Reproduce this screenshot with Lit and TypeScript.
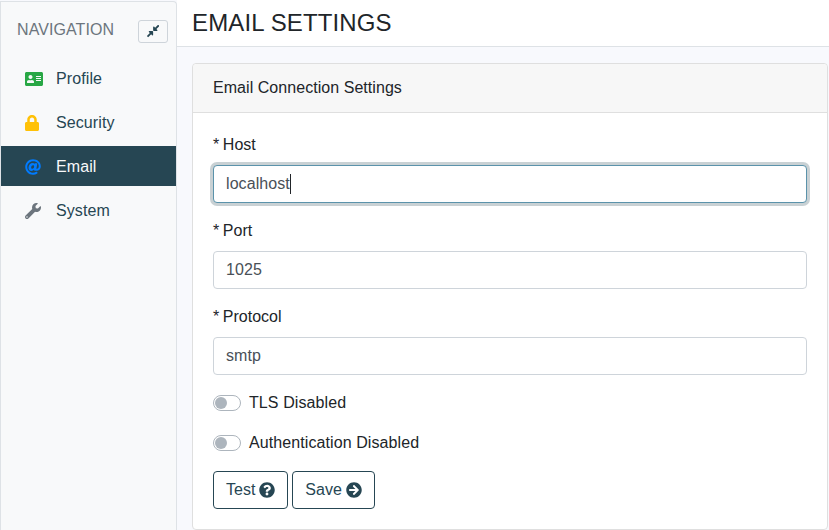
import { LitElement, html, css, svg } from "lit";
import { customElement } from "lit/decorators.js";

const ICONS: Record<string, [string, string]> = {
  card: ["0 0 576 512", "M528 32H48C21.5 32 0 53.5 0 80v352c0 26.5 21.5 48 48 48h480c26.5 0 48-21.5 48-48V80c0-26.5-21.5-48-48-48zm-352 96c35.3 0 64 28.7 64 64s-28.7 64-64 64-64-28.7-64-64 28.7-64 64-64zm112 236.8c0 10.6-10 19.2-22.4 19.2H86.4C74 384 64 375.4 64 364.8v-19.2c0-31.8 30.1-57.6 67.2-57.6h5c12.3 5.1 25.7 8 39.8 8s27.6-2.9 39.8-8h5c37.1 0 67.2 25.8 67.2 57.6v19.2zM512 312c0 4.4-3.6 8-8 8H360c-4.4 0-8-3.6-8-8v-16c0-4.4 3.6-8 8-8h144c4.4 0 8 3.6 8 8v16zm0-64c0 4.4-3.6 8-8 8H360c-4.4 0-8-3.6-8-8v-16c0-4.4 3.6-8 8-8h144c4.4 0 8 3.6 8 8v16zm0-64c0 4.4-3.6 8-8 8H360c-4.4 0-8-3.6-8-8v-16c0-4.4 3.6-8 8-8h144c4.4 0 8 3.6 8 8v16z"],
  lock: ["0 0 448 512", "M400 224h-24v-72C376 68.2 307.8 0 224 0S72 68.2 72 152v72H48c-26.5 0-48 21.5-48 48v192c0 26.5 21.5 48 48 48h352c26.5 0 48-21.5 48-48V272c0-26.5-21.5-48-48-48zm-104 0H152v-72c0-39.7 32.3-72 72-72s72 32.3 72 72v72z"],
  at: ["0 0 512 512", "M256 8C118.941 8 8 118.919 8 256c0 137.059 110.919 248 248 248 48.154 0 95.342-14.14 135.408-40.223 12.005-7.815 14.625-24.288 5.552-35.372l-10.177-12.433c-7.671-9.371-21.179-11.667-31.373-5.129C325.92 429.757 291.314 440 256 440c-101.458 0-184-82.542-184-184S154.542 72 256 72c100.139 0 184 57.619 184 160 0 38.786-21.093 79.742-58.17 83.693-17.349-.454-16.91-12.857-13.476-30.024l23.433-121.11C394.653 149.75 383.308 136 368.225 136h-44.981a13.518 13.518 0 0 0-13.432 11.993l-.01.092c-14.697-17.901-40.448-21.775-59.971-21.775-74.58 0-137.831 62.234-137.831 151.46 0 65.303 36.785 105.87 96 105.87 26.984 0 57.369-15.637 74.991-38.333 9.522 34.104 40.613 34.103 70.71 34.103C462.609 379.41 504 307.798 504 232 504 95.653 394.023 8 256 8zm-21.68 304.43c-22.249 0-36.07-15.623-36.07-40.771 0-44.993 30.779-72.729 58.63-72.729 22.292 0 35.601 15.241 35.601 40.77 0 45.061-33.875 72.73-58.161 72.73z"],
  wrench: ["0 0 512 512", "M507.73 109.1c-2.24-9.03-13.54-12.09-20.12-5.51l-74.36 74.36-67.88-11.31-11.31-67.88 74.36-74.36c6.62-6.62 3.43-17.9-5.66-20.16-47.38-11.74-99.55.91-136.58 37.93-39.64 39.64-50.55 97.1-34.05 147.2L18.74 402.76c-24.99 24.99-24.99 65.51 0 90.5 24.99 24.99 65.51 24.99 90.5 0l213.21-213.21c50.12 16.71 107.47 5.68 147.37-34.22 37.07-37.07 49.7-89.32 37.91-136.73zM64 472c-13.25 0-24-10.75-24-24 0-13.26 10.75-24 24-24s24 10.74 24 24c0 13.25-10.75 24-24 24z"],
  question: ["0 0 512 512", "M504 256c0 136.997-111.043 248-248 248S8 392.997 8 256C8 119.083 119.043 8 256 8s248 111.083 248 248zM262.655 90c-54.497 0-89.255 22.957-116.549 63.758-3.536 5.286-2.353 12.415 2.715 16.258l34.699 26.31c5.205 3.947 12.621 3.008 16.665-2.122 17.864-22.658 30.113-35.797 57.303-35.797 20.429 0 45.698 13.148 45.698 32.958 0 14.976-12.363 22.667-32.534 33.976C247.128 238.528 216 254.941 216 296v4c0 6.627 5.373 12 12 12h56c6.627 0 12-5.373 12-12v-1.333c0-28.462 83.186-29.647 83.186-106.667 0-58.002-60.165-102-116.531-102zM256 338c-25.365 0-46 20.635-46 46 0 25.364 20.635 46 46 46s46-20.636 46-46c0-25.365-20.635-46-46-46z"],
  arrow: ["0 0 512 512", "M256 8c137 0 248 111 248 248S393 504 256 504 8 393 8 256 119 8 256 8zm-28.9 143.6l75.5 72.4H120c-13.3 0-24 10.7-24 24v16c0 13.3 10.7 24 24 24h182.6l-75.5 72.4c-9.7 9.3-9.9 24.8-.4 34.3l11 10.9c9.4 9.4 24.6 9.4 33.9 0L404.3 273c9.4-9.4 9.4-24.6 0-33.9L271.6 106.3c-9.4-9.4-24.6-9.4-33.9 0l-11 10.9c-9.3 9.6-9.1 25.1.4 34.4z"],
  compress: ["0 0 448 512", "M4.686 427.314L104 328l-32.922-31.029C55.958 281.851 66.666 256 88.048 256h112C213.303 256 224 266.745 224 280v112c0 21.382-25.803 32.09-40.922 16.971L152 376l-99.314 99.314c-6.248 6.248-16.379 6.248-22.627 0L4.686 449.941c-6.248-6.248-6.248-16.379 0-22.627zM443.314 84.686L344 184l32.922 31.029c15.12 15.12 4.412 40.971-16.97 40.971h-112C234.697 256 224 245.255 224 232V120c0-21.382 25.803-32.09 40.922-16.971L296 136l99.314-99.314c6.248-6.248 16.379-6.248 22.627 0l25.373 25.373c6.248 6.248 6.248 16.379 0 22.627z"],
};

const icon = (name: string, cls = "") => {
  const [vb, d] = ICONS[name];
  return html`<svg class="ico ${cls}" viewBox=${vb} aria-hidden="true">${svg`<path fill="currentColor" d=${d}></path>`}</svg>`;
};

@customElement("app-root")
export class AppRoot extends LitElement {
  static styles = css`
    :host {
      display: flex;
      width: 829px;
      height: 530px;
      overflow: hidden;
      font-family: "Liberation Sans", Arial, sans-serif;
      font-size: 16px;
      line-height: 24px;
      color: #212529;
      background: #f8f9fd;
      text-rendering: optimizeSpeed;
    }
    * { box-sizing: border-box; }
    .ico { display: block; height: 16px; width: auto; flex: none; }
    .side {
      flex: none;
      width: 177px;
      height: 540px;
      margin-top: 1px;
      background: #f8f9fa;
      border: 1px solid #dee2e6;
      border-bottom: 0;
      border-radius: 0 4px 0 0;
    }
    .side-head {
      display: flex;
      align-items: center;
      justify-content: space-between;
      height: 44px;
      margin-top: 6px;
      padding: 0 8px 0 16px;
      color: #6c757d;
      letter-spacing: 0.08px;
    }
    .collapse {
      display: flex;
      align-items: center;
      justify-content: center;
      width: 30px;
      height: 23px;
      padding: 0;
      margin-top: 2px;
      background: transparent;
      border: 1px solid #ced4da;
      border-radius: 3px;
      color: #264653;
    }
    .collapse .ico { height: 14px; }
    .nav { display: flex; flex-direction: column; gap: 4px; padding: 6px 0 0; margin: 0; list-style: none; }
    .nav li {
      display: flex;
      align-items: center;
      height: 40px;
      padding: 1px 0 0 24px;
      color: #264653;
      letter-spacing: 0.1px;
    }
    .nav li.active { background: #264653; color: #f8f9fa; }
    .icon-slot { width: 31px; flex: none; display: flex; }
    .green { color: #28a745; }
    .yellow { color: #ffc107; }
    .blue { color: #007bff; }
    .gray { color: #6c757d; }
    .main { flex: 1; min-width: 0; display: flex; flex-direction: column; }
    .top {
      flex: none;
      height: 47px;
      padding: 8px 15px 0;
      background: #fff;
      border-bottom: 1px solid #dee2e6;
    }
    h1 { margin: 0; font-size: 24px; font-weight: 400; line-height: 29px; letter-spacing: 0.14px; }
    .content { padding: 16px 1px 0 15px; }
    .card {
      background: #fff;
      border: 1px solid #dfdfdf;
      border-radius: 4px;
    }
    .card-head {
      height: 49px;
      padding: 12px 20px;
      background: #f7f7f7;
      border-bottom: 1px solid #dfdfdf;
      border-radius: 4px 4px 0 0;
      letter-spacing: 0.05px;
    }
    .card-body { padding: 20px; }
    .group { margin-bottom: 16px; }
    label.lbl { display: block; margin-bottom: 8px; word-spacing: -0.8px; }
    .field { position: relative; }
    input.ctl {
      display: block;
      width: 100%;
      height: 38px;
      padding: 6px 12px;
      font: inherit;
      letter-spacing: 0.08px;
      color: #495057;
      background: #fff;
      border: 1px solid #ced4da;
      border-radius: 4px;
      outline: none;
    }
    input.focus {
      border-color: #5b93ab;
      box-shadow: 0 0 0 3px rgba(38, 70, 83, 0.25);
    }
    .caret {
      position: absolute;
      left: 77px;
      top: 9px;
      width: 1px;
      height: 20px;
      background: #212529;
    }
    .switch { display: flex; align-items: center; height: 24px; margin-bottom: 16px; gap: 8px; letter-spacing: 0.09px; }
    .track {
      position: relative;
      width: 28px;
      height: 16px;
      background: #fff;
      border: 1px solid #adb5bd;
      border-radius: 8px;
    }
    .knob {
      position: absolute;
      left: 1px;
      top: 1px;
      width: 12px;
      height: 12px;
      border-radius: 50%;
      background: #adb5bd;
    }
    .actions { display: flex; gap: 4px; }
    .btn {
      display: flex;
      align-items: center;
      gap: 4px;
      height: 38px;
      padding: 0 12px;
      font: inherit;
      color: #264653;
      background: transparent;
      border: 1px solid #264653;
      border-radius: 4px;
    }
  `;

  private item(name: string, cls: string, label: string, active = false) {
    return html`<li class=${active ? "active" : ""}><span class="icon-slot">${icon(name, cls)}</span>${label}</li>`;
  }

  render() {
    return html`
      <aside class="side">
        <div class="side-head">
          <span>NAVIGATION</span>
          <button class="collapse" aria-label="Collapse">${icon("compress")}</button>
        </div>
        <ul class="nav">
          ${this.item("card", "green", "Profile")}
          ${this.item("lock", "yellow", "Security")}
          ${this.item("at", "blue", "Email", true)}
          ${this.item("wrench", "gray", "System")}
        </ul>
      </aside>
      <main class="main">
        <header class="top"><h1>EMAIL SETTINGS</h1></header>
        <div class="content">
          <section class="card">
            <div class="card-head">Email Connection Settings</div>
            <div class="card-body">
              <div class="group">
                <label class="lbl">* Host</label>
                <div class="field">
                  <input class="ctl focus" .value=${"localhost"} />
                  <span class="caret"></span>
                </div>
              </div>
              <div class="group">
                <label class="lbl">* Port</label>
                <input class="ctl" .value=${"1025"} />
              </div>
              <div class="group">
                <label class="lbl">* Protocol</label>
                <input class="ctl" .value=${"smtp"} />
              </div>
              <div class="switch"><span class="track"><span class="knob"></span></span>TLS Disabled</div>
              <div class="switch"><span class="track"><span class="knob"></span></span>Authentication Disabled</div>
              <div class="actions">
                <button class="btn">Test ${icon("question")}</button>
                <button class="btn">Save ${icon("arrow")}</button>
              </div>
            </div>
          </section>
        </div>
      </main>
    `;
  }
}
